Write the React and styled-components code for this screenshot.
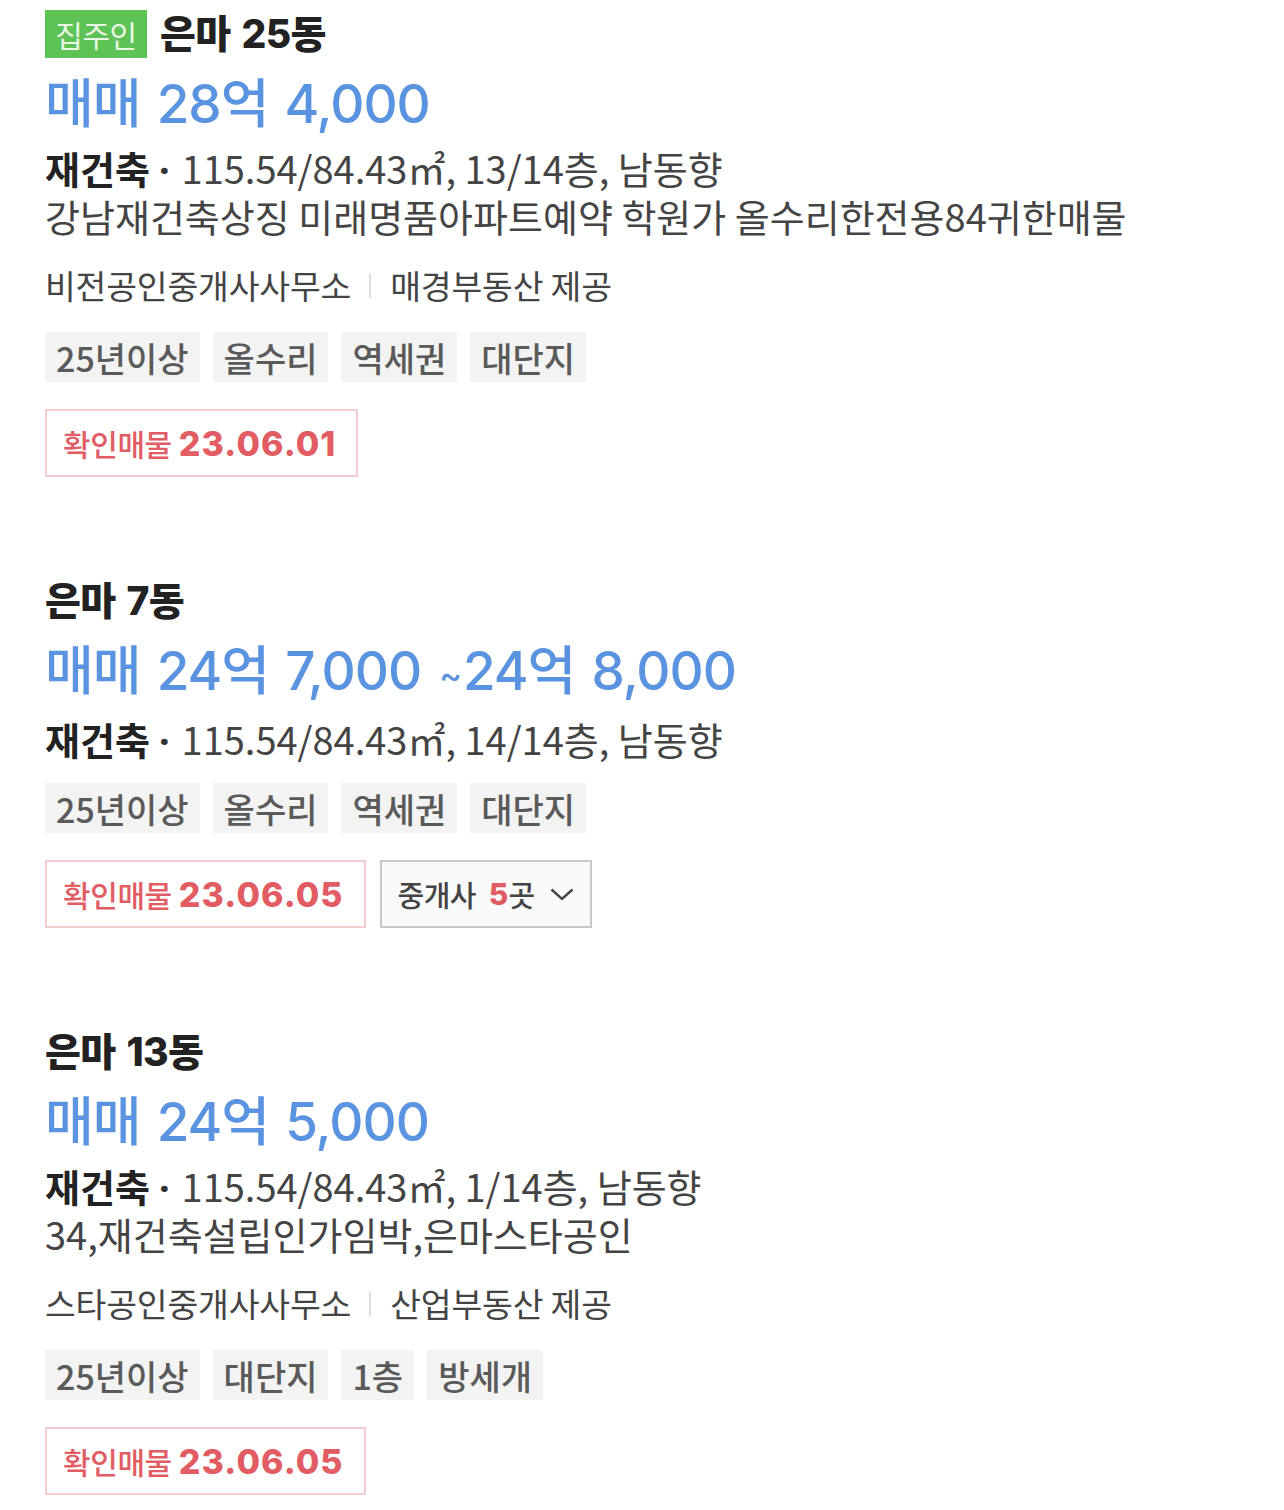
import React from "react";
import styled, { createGlobalStyle } from "styled-components";

const GlobalStyle = createGlobalStyle`
  html, body {
    margin: 0;
    padding: 0;
    background: #ffffff;
  }
  body {
    font-family: "Noto Sans CJK KR", "Noto Sans", sans-serif;
    color: #222222;
  }
`;

const Page = styled.div`
  padding: 10px 0 0 45px;
  display: flex;
  flex-direction: column;
  gap: 100px;
`;

const Item = styled.section`
  display: flex;
  flex-direction: column;
`;

const Header = styled.div`
  display: flex;
  align-items: center;
  gap: 13px;
  height: 48px;
`;

const OwnerBadge = styled.span`
  display: inline-flex;
  align-items: center;
  justify-content: center;
  width: 102px;
  height: 48px;
  background: #5cc354;
  color: #eaf7e7;
  font-size: 30px;
  letter-spacing: -0.5px;
`;

const Title = styled.h2`
  margin: 0;
  font-family: Inter, "Noto Sans CJK KR", sans-serif;
  font-size: 39px;
  font-weight: 800;
  letter-spacing: -0.6px;
  word-spacing: 3px;
  color: #222222;
  line-height: 48px;
`;

const Price = styled.div`
  margin-top: 14px;
  font-family: Inter, "Noto Sans CJK KR", sans-serif;
  font-size: 53px;
  font-weight: 500;
  line-height: 64px;
  letter-spacing: -1px;
  word-spacing: 3px;
  color: #5a93e0;
  white-space: nowrap;

  .tilde {
    font-size: 34px;
    margin: 0 2px 0 2px;
    vertical-align: 3px;
  }
`;

const Spec = styled.div`
  margin-top: 8px;
  font-size: 38px;
  line-height: 48px;
  color: #444444;
  white-space: nowrap;

  b {
    font-weight: 700;
    color: #222222;
  }
`;

const Dot = styled.span`
  font-family: "Noto Sans", sans-serif;
  font-weight: 700;
  line-height: 0;
  margin: 0 12px 0 9px;
  color: #333333;
`;

const Agent = styled.div`
  display: flex;
  align-items: center;
  margin: 22px 0 6px;
  height: 44px;
  font-size: 33.5px;
  letter-spacing: -0.2px;
  color: #444444;
`;

const Divider = styled.span`
  width: 2px;
  height: 24px;
  background: #dcdcdc;
  margin: 4px 19px 0 18px;
`;

const Tags = styled.div`
  display: flex;
  gap: 13px;
  margin-top: 20px;
`;

const Tag = styled.span`
  display: inline-flex;
  align-items: center;
  height: 50px;
  padding: 0 11px;
  background: #f3f3f3;
  color: #5a5a5a;
  font-size: 34px;
  font-weight: 500;
`;

const Actions = styled.div`
  display: flex;
  gap: 14px;
  margin-top: 27px;
`;

const Confirmed = styled.div`
  display: inline-flex;
  align-items: center;
  box-sizing: border-box;
  height: 68px;
  padding: 0 20px 0 16px;
  border: 2px solid #f3cdd0;
  color: #e25c63;

  .label {
    font-size: 30px;
    font-weight: 500;
    letter-spacing: -0.4px;
    margin-right: 7px;
  }

  .date {
    font-family: Inter, "Noto Sans", sans-serif;
    font-size: 34px;
    font-weight: 800;
    letter-spacing: 1.1px;
  }
`;

const BrokerButton = styled.button`
  display: inline-flex;
  align-items: center;
  box-sizing: border-box;
  height: 68px;
  padding: 0 16px;
  border: 2px solid #c8c8c8;
  background: #fafafa;
  color: #444444;
  font-family: "Noto Sans CJK KR", sans-serif;
  font-size: 29px;
  font-weight: 500;
  letter-spacing: -0.6px;
  cursor: pointer;

  .count {
    margin-left: 13px;
    color: #e25c63;
    font-family: Inter, sans-serif;
    font-size: 30px;
    font-weight: 800;
    letter-spacing: 0;
  }

  svg {
    margin-left: 16px;
  }
`;

const Chevron = () => (
  <svg width="24" height="13" viewBox="0 0 24 13" fill="none">
    <polyline points="1.5,1.5 12,11 22.5,1.5" stroke="#444" strokeWidth="2.4" />
  </svg>
);

const listings = [
  {
    owner: true,
    name: "은마 25동",
    price: ["매매 28억 4,000"],
    spec: "115.54/84.43㎡, 13/14층, 남동향",
    desc: "강남재건축상징 미래명품아파트예약 학원가 올수리한전용84귀한매물",
    agent: "비전공인중개사사무소",
    source: "매경부동산 제공",
    tags: ["25년이상", "올수리", "역세권", "대단지"],
    date: "23.06.01",
  },
  {
    name: "은마 7동",
    price: ["매매 24억 7,000", "24억 8,000"],
    spec: "115.54/84.43㎡, 14/14층, 남동향",
    tags: ["25년이상", "올수리", "역세권", "대단지"],
    date: "23.06.05",
    brokers: 5,
  },
  {
    name: "은마 13동",
    price: ["매매 24억 5,000"],
    spec: "115.54/84.43㎡, 1/14층, 남동향",
    desc: "34,재건축설립인가임박,은마스타공인",
    agent: "스타공인중개사사무소",
    source: "산업부동산 제공",
    tags: ["25년이상", "대단지", "1층", "방세개"],
    date: "23.06.05",
  },
];

export default function App() {
  return (
    <>
      <GlobalStyle />
      <Page>
        {listings.map((item) => (
          <Item key={item.name}>
            <Header>
              {item.owner && <OwnerBadge>집주인</OwnerBadge>}
              <Title>{item.name}</Title>
            </Header>
            <Price>
              {item.price[0]}
              {item.price[1] && (
                <>
                  {" "}
                  <span className="tilde">~</span>
                  {item.price[1]}
                </>
              )}
            </Price>
            <Spec>
              <div>
                <b>재건축</b>
                <Dot>·</Dot>
                {item.spec}
              </div>
              {item.desc && <div>{item.desc}</div>}
            </Spec>
            {item.agent && (
              <Agent>
                {item.agent}
                <Divider />
                {item.source}
              </Agent>
            )}
            <Tags>
              {item.tags.map((t) => (
                <Tag key={t}>{t}</Tag>
              ))}
            </Tags>
            <Actions>
              <Confirmed>
                <span className="label">확인매물</span>
                <span className="date">{item.date}</span>
              </Confirmed>
              {item.brokers && (
                <BrokerButton>
                  중개사
                  <span className="count">{item.brokers}</span>곳
                  <Chevron />
                </BrokerButton>
              )}
            </Actions>
          </Item>
        ))}
      </Page>
    </>
  );
}
